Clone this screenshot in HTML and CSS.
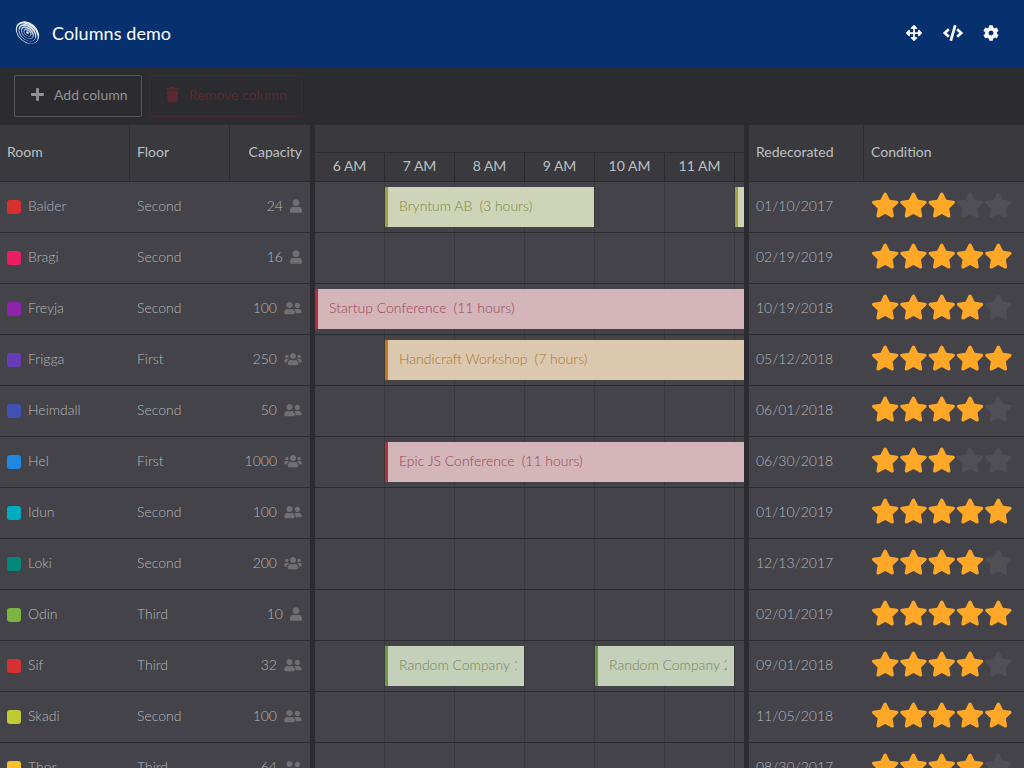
FILE: index.html
```html
<!DOCTYPE html>
<html>
<head>
  <title>Columns demo</title>
  <link rel="stylesheet" href="styles.css">
</head>
<body>
  <svg class="sprites" xmlns="http://www.w3.org/2000/svg">
    <symbol id="i-star" viewBox="0 0 576 512"><path d="M259.3 17.8L194 150.2 47.9 171.5c-26.2 3.8-36.7 36.1-17.7 54.6l105.7 103-25 145.5c-4.5 26.3 23.2 46 46.4 33.7L288 439.6l130.7 68.7c23.2 12.2 50.9-7.4 46.4-33.7l-25-145.5 105.7-103c19-18.5 8.5-50.8-17.7-54.6L382 150.2 316.7 17.8c-11.7-23.6-45.6-23.9-57.4 0z"/></symbol>
    <symbol id="i-user" viewBox="0 0 448 512"><path d="M224 256c70.7 0 128-57.3 128-128S294.7 0 224 0 96 57.3 96 128s57.3 128 128 128zm89.6 32h-16.7c-22.2 10.2-46.9 16-72.9 16s-50.6-5.8-72.9-16h-16.7C60.2 288 0 348.2 0 422.4V464c0 26.5 21.5 48 48 48h352c26.5 0 48-21.5 48-48v-41.6c0-74.2-60.2-134.4-134.4-134.4z"/></symbol>
    <symbol id="i-friends" viewBox="0 0 640 512"><path d="M192 256c61.9 0 112-50.1 112-112S253.9 32 192 32 80 82.1 80 144s50.1 112 112 112zm76.8 32h-8.3c-20.8 10-43.9 16-68.5 16s-47.6-6-68.5-16h-8.3C51.6 288 0 339.6 0 403.2V432c0 26.5 21.5 48 48 48h288c26.5 0 48-21.5 48-48v-28.8c0-63.6-51.6-115.2-115.2-115.2zM480 256c53 0 96-43 96-96s-43-96-96-96-96 43-96 96 43 96 96 96zm48 32h-3.8c-13.9 4.8-28.6 8-44.2 8s-30.3-3.2-44.2-8H432c-20.4 0-39.2 5.9-55.7 15.4 24.4 26.3 39.7 61.2 39.7 99.8v38.4c0 2.2-.5 4.3-.6 6.4H592c26.5 0 48-21.5 48-48 0-61.9-50.1-112-112-112z"/></symbol>
    <symbol id="i-users" viewBox="0 0 640 512"><path d="M96 224c35.3 0 64-28.7 64-64s-28.7-64-64-64-64 28.7-64 64 28.7 64 64 64zm448 0c35.3 0 64-28.7 64-64s-28.7-64-64-64-64 28.7-64 64 28.7 64 64 64zm32 32h-64c-17.6 0-33.5 7.1-45.1 18.6 40.3 22.1 68.9 62 75.1 109.4h66c17.7 0 32-14.3 32-32v-32c0-35.3-28.7-64-64-64zm-256 0c61.9 0 112-50.1 112-112S381.9 32 320 32 208 82.1 208 144s50.1 112 112 112zm76.8 32h-8.3c-20.8 10-43.1 16-68.5 16s-47.6-6-68.5-16h-8.3C179.6 288 128 339.6 128 403.2V432c0 26.5 21.5 48 48 48h288c26.5 0 48-21.5 48-48v-28.8c0-63.6-51.6-115.2-115.2-115.2zm-223.7-13.4C161.5 263.1 145.6 256 128 256H64c-35.3 0-64 28.7-64 64v32c0 17.7 14.3 32 32 32h65.9c6.3-47.4 34.9-87.3 75.2-109.4z"/></symbol>
    <symbol id="stars-3" viewBox="0 0 142 26"><use href="#i-star" class="star on" x="0" width="28.3" height="26"/><use href="#i-star" class="star on" x="28.3" width="28.3" height="26"/><use href="#i-star" class="star on" x="56.6" width="28.3" height="26"/><use href="#i-star" class="star off" x="84.9" width="28.3" height="26"/><use href="#i-star" class="star off" x="113.2" width="28.3" height="26"/></symbol>
    <symbol id="stars-4" viewBox="0 0 142 26"><use href="#i-star" class="star on" x="0" width="28.3" height="26"/><use href="#i-star" class="star on" x="28.3" width="28.3" height="26"/><use href="#i-star" class="star on" x="56.6" width="28.3" height="26"/><use href="#i-star" class="star on" x="84.9" width="28.3" height="26"/><use href="#i-star" class="star off" x="113.2" width="28.3" height="26"/></symbol>
    <symbol id="stars-5" viewBox="0 0 142 26"><use href="#i-star" class="star on" x="0" width="28.3" height="26"/><use href="#i-star" class="star on" x="28.3" width="28.3" height="26"/><use href="#i-star" class="star on" x="56.6" width="28.3" height="26"/><use href="#i-star" class="star on" x="84.9" width="28.3" height="26"/><use href="#i-star" class="star on" x="113.2" width="28.3" height="26"/></symbol>
  </svg>

  <header class="topbar">
    <svg class="logo" viewBox="0 0 28 28">
      <g transform="rotate(42 14 14)">
        <ellipse cx="14" cy="14" rx="13.5" ry="10" fill="#e6ebf1"/>
        <ellipse cx="14.6" cy="15" rx="12.4" ry="8.4" fill="#07306f"/>
        <ellipse cx="14" cy="14.2" rx="10.6" ry="7.6" fill="#d5dde8"/>
        <ellipse cx="14.6" cy="15" rx="9.6" ry="6.2" fill="#07306f"/>
        <ellipse cx="14" cy="14.2" rx="7.8" ry="5.2" fill="#c3cfde"/>
        <ellipse cx="14.4" cy="14.8" rx="6.8" ry="4" fill="#07306f"/>
        <ellipse cx="14" cy="14" rx="4.8" ry="3" fill="#b4c2d6"/>
        <ellipse cx="14.3" cy="14.5" rx="3.8" ry="2" fill="#07306f"/>
        <ellipse cx="14" cy="14" rx="1.6" ry="1" fill="#fff"/>
      </g>
    </svg>
    <h1 class="title">Columns demo</h1>
    <div class="tools">
      <svg class="tool move" viewBox="0 0 512 512"><path d="M352.201 425.775l-79.196 79.196c-9.373 9.373-24.568 9.373-33.941 0l-79.196-79.196c-15.119-15.119-4.411-40.971 16.971-40.97h51.162L228 284H127.196v51.162c0 21.382-25.851 32.09-40.971 16.971L7.029 272.937c-9.373-9.373-9.373-24.569 0-33.941L86.225 159.8c15.119-15.119 40.971-4.411 40.971 16.971V228H228V127.196h-51.23c-21.382 0-32.09-25.851-16.971-40.971l79.196-79.196c9.373-9.373 24.568-9.373 33.941 0l79.196 79.196c15.119 15.119 4.411 40.971-16.971 40.971h-51.162V228h100.804v-51.162c0-21.382 25.851-32.09 40.97-16.971l79.196 79.196c9.373 9.373 9.373 24.569 0 33.941L425.773 352.2c-15.119 15.119-40.971 4.411-40.97-16.971V284H284v100.804h51.23c21.382 0 32.09 25.851 16.971 40.971z"/></svg>
      <svg class="tool code" viewBox="0 0 640 512"><path d="M278.9 511.5l-61-17.7c-6.4-1.8-10-8.5-8.2-14.9L346.2 8.7c1.8-6.4 8.5-10 14.9-8.2l61 17.7c6.4 1.8 10 8.5 8.2 14.9L293.8 503.3c-1.9 6.4-8.5 10.1-14.9 8.2zm-114-112.2l43.5-46.4c4.6-4.9 4.3-12.7-.8-17.2L117 256l90.6-79.7c5.1-4.5 5.5-12.3.8-17.2l-43.5-46.4c-4.5-4.8-12.1-5.1-17-.5L3.8 247.2c-5.1 4.7-5.1 12.8 0 17.5l144.1 135.1c4.9 4.6 12.5 4.4 17-.5zm327.2.6l144.1-135.1c5.1-4.7 5.1-12.8 0-17.5L492.1 112.1c-4.8-4.5-12.4-4.3-17 .5L431.6 159c-4.6 4.9-4.3 12.7.8 17.2L523 256l-90.6 79.7c-5.1 4.5-5.5 12.3-.8 17.2l43.5 46.4c4.5 4.9 12.1 5.1 17 .6z"/></svg>
      <svg class="tool cog" viewBox="0 0 512 512"><path d="M487.4 315.7l-42.6-24.6c4.3-23.2 4.3-47 0-70.2l42.6-24.6c4.9-2.8 7.1-8.6 5.5-14-11.1-35.6-30-67.8-54.7-94.6-3.8-4.1-10-5.1-14.8-2.3L380.8 110c-17.9-15.4-38.5-27.3-60.8-35.1V25.8c0-5.6-3.9-10.5-9.4-11.7-36.7-8.2-74.3-7.8-109.2 0-5.5 1.2-9.4 6.1-9.4 11.7V75c-22.2 7.9-42.8 19.8-60.8 35.1L88.7 85.5c-4.9-2.8-11-1.9-14.8 2.3-24.7 26.7-43.6 58.9-54.7 94.6-1.7 5.4.6 11.2 5.5 14L67.3 221c-4.3 23.2-4.3 47 0 70.2l-42.6 24.6c-4.9 2.8-7.1 8.6-5.5 14 11.1 35.6 30 67.8 54.7 94.6 3.8 4.1 10 5.1 14.8 2.3l42.6-24.6c17.9 15.4 38.5 27.3 60.8 35.1v49.2c0 5.6 3.9 10.5 9.4 11.7 36.7 8.2 74.3 7.8 109.2 0 5.5-1.2 9.4-6.1 9.4-11.7v-49.2c22.2-7.9 42.8-19.8 60.8-35.1l42.6 24.6c4.9 2.8 11 1.9 14.8-2.3 24.7-26.7 43.6-58.9 54.7-94.6 1.5-5.5-.7-11.3-5.6-14.1zM256 336c-44.1 0-80-35.9-80-80s35.9-80 80-80 80 35.9 80 80-35.9 80-80 80z"/></svg>
    </div>
  </header>

  <div class="toolbar">
    <button class="btn add">
      <svg class="btn-icon" viewBox="0 0 448 512"><path d="M416 208H272V64c0-17.67-14.33-32-32-32h-32c-17.67 0-32 14.33-32 32v144H32c-17.67 0-32 14.33-32 32v32c0 17.67 14.33 32 32 32h144v144c0 17.67 14.33 32 32 32h32c17.67 0 32-14.33 32-32V304h144c17.67 0 32-14.33 32-32v-32c0-17.67-14.33-32-32-32z"/></svg>
      Add column
    </button>
    <button class="btn remove">
      <svg class="btn-icon" viewBox="0 0 448 512"><path d="M432 32H312l-9.4-18.7A24 24 0 0 0 281.1 0H166.8a23.72 23.72 0 0 0-21.4 13.3L136 32H16A16 16 0 0 0 0 48v32a16 16 0 0 0 16 16h416a16 16 0 0 0 16-16V48a16 16 0 0 0-16-16zM53.2 467a48 48 0 0 0 47.9 45h245.8a48 48 0 0 0 47.9-45L416 128H32z"/></svg>
      Remove column
    </button>
  </div>

  <div class="scheduler">
    <!-- locked columns -->
    <section class="part left">
      <div class="head-row">
        <div class="head-cell">Room</div>
        <div class="head-cell">Floor</div>
        <div class="head-cell end">Capacity</div>
      </div>
      <div class="row"><div class="cell"><i class="swatch c-red"></i>Balder</div><div class="cell">Second</div><div class="cell end">24<svg class="cap one"><use href="#i-user"/></svg></div></div>
      <div class="row"><div class="cell"><i class="swatch c-pink"></i>Bragi</div><div class="cell">Second</div><div class="cell end">16<svg class="cap one"><use href="#i-user"/></svg></div></div>
      <div class="row"><div class="cell"><i class="swatch c-purple"></i>Freyja</div><div class="cell">Second</div><div class="cell end">100<svg class="cap"><use href="#i-friends"/></svg></div></div>
      <div class="row"><div class="cell"><i class="swatch c-deep"></i>Frigga</div><div class="cell">First</div><div class="cell end">250<svg class="cap"><use href="#i-users"/></svg></div></div>
      <div class="row"><div class="cell"><i class="swatch c-indigo"></i>Heimdall</div><div class="cell">Second</div><div class="cell end">50<svg class="cap"><use href="#i-friends"/></svg></div></div>
      <div class="row"><div class="cell"><i class="swatch c-blue"></i>Hel</div><div class="cell">First</div><div class="cell end">1000<svg class="cap"><use href="#i-users"/></svg></div></div>
      <div class="row"><div class="cell"><i class="swatch c-cyan"></i>Idun</div><div class="cell">Second</div><div class="cell end">100<svg class="cap"><use href="#i-friends"/></svg></div></div>
      <div class="row"><div class="cell"><i class="swatch c-teal"></i>Loki</div><div class="cell">Second</div><div class="cell end">200<svg class="cap"><use href="#i-users"/></svg></div></div>
      <div class="row"><div class="cell"><i class="swatch c-green"></i>Odin</div><div class="cell">Third</div><div class="cell end">10<svg class="cap one"><use href="#i-user"/></svg></div></div>
      <div class="row"><div class="cell"><i class="swatch c-red"></i>Sif</div><div class="cell">Third</div><div class="cell end">32<svg class="cap"><use href="#i-friends"/></svg></div></div>
      <div class="row"><div class="cell"><i class="swatch c-lime"></i>Skadi</div><div class="cell">Second</div><div class="cell end">100<svg class="cap"><use href="#i-friends"/></svg></div></div>
      <div class="row"><div class="cell"><i class="swatch c-amber"></i>Thor</div><div class="cell">Third</div><div class="cell end">64<svg class="cap"><use href="#i-friends"/></svg></div></div>
    </section>

    <div class="splitter"></div>

    <!-- timeline -->
    <section class="part timeline">
      <div class="time-head">
        <div class="time-top"></div>
        <div class="time-ticks">
          <div class="tick">6 AM</div><div class="tick">7 AM</div><div class="tick">8 AM</div><div class="tick">9 AM</div><div class="tick">10 AM</div><div class="tick">11 AM</div><div class="tick"></div>
        </div>
      </div>
      <div class="time-row"><div class="event olive" style="left:70px;width:209px"><span class="event-text">Bryntum AB<em>(3 hours)</em></span></div><div class="event olive" style="left:420px;width:209px"></div></div>
      <div class="time-row"></div>
      <div class="time-row"><div class="event red" style="left:0;width:770px"><span class="event-text">Startup Conference<em>(11 hours)</em></span></div></div>
      <div class="time-row"><div class="event orange" style="left:70px;width:490px"><span class="event-text">Handicraft Workshop<em>(7 hours)</em></span></div></div>
      <div class="time-row"></div>
      <div class="time-row"><div class="event red" style="left:70px;width:770px"><span class="event-text">Epic JS Conference<em>(11 hours)</em></span></div></div>
      <div class="time-row"></div>
      <div class="time-row"></div>
      <div class="time-row"></div>
      <div class="time-row"><div class="event green" style="left:70px;width:139px"><span class="event-text">Random Company 1</span></div><div class="event green" style="left:280px;width:139px"><span class="event-text">Random Company 2</span></div></div>
      <div class="time-row"></div>
      <div class="time-row"></div>
    </section>

    <div class="splitter"></div>

    <!-- right columns -->
    <section class="part right">
      <div class="head-row">
        <div class="head-cell">Redecorated</div>
        <div class="head-cell">Condition</div>
      </div>
      <div class="row"><div class="cell">01/10/2017</div><div class="cell"><svg class="stars"><use href="#stars-3"/></svg></div></div>
      <div class="row"><div class="cell">02/19/2019</div><div class="cell"><svg class="stars"><use href="#stars-5"/></svg></div></div>
      <div class="row"><div class="cell">10/19/2018</div><div class="cell"><svg class="stars"><use href="#stars-4"/></svg></div></div>
      <div class="row"><div class="cell">05/12/2018</div><div class="cell"><svg class="stars"><use href="#stars-5"/></svg></div></div>
      <div class="row"><div class="cell">06/01/2018</div><div class="cell"><svg class="stars"><use href="#stars-4"/></svg></div></div>
      <div class="row"><div class="cell">06/30/2018</div><div class="cell"><svg class="stars"><use href="#stars-3"/></svg></div></div>
      <div class="row"><div class="cell">01/10/2019</div><div class="cell"><svg class="stars"><use href="#stars-5"/></svg></div></div>
      <div class="row"><div class="cell">12/13/2017</div><div class="cell"><svg class="stars"><use href="#stars-4"/></svg></div></div>
      <div class="row"><div class="cell">02/01/2019</div><div class="cell"><svg class="stars"><use href="#stars-5"/></svg></div></div>
      <div class="row"><div class="cell">09/01/2018</div><div class="cell"><svg class="stars"><use href="#stars-4"/></svg></div></div>
      <div class="row"><div class="cell">11/05/2018</div><div class="cell"><svg class="stars"><use href="#stars-5"/></svg></div></div>
      <div class="row"><div class="cell">08/30/2017</div><div class="cell"><svg class="stars"><use href="#stars-4"/></svg></div></div>
    </section>
  </div>
</body>
</html>
```

FILE: styles.css
```css
/* page */
html, body {
  height: 100%;
}

body {
  margin: 0;
  overflow: hidden;
  background-color: #2b2b30;
  color: #b6b6b8;
  font-family: Lato, "Liberation Sans", sans-serif;
  font-size: 14px;
}

.sprites {
  display: none;
}

/* top bar */
.topbar {
  display: flex;
  align-items: center;
  height: 67px;
  padding: 0 25px 2px 14px;
  box-sizing: border-box;
  background-color: #07306f;
}

.logo {
  width: 27px;
  height: 27px;
  margin-right: 11px;
}

.title {
  margin: 0;
  color: #fff;
  font-size: 18px;
  font-weight: 400;
  letter-spacing: 0.08px;
}

.tools {
  display: flex;
  align-items: center;
  gap: 20px;
  margin-left: auto;
}

.tool {
  height: 16px;
  fill: #fff;
}

.move, .cog {
  width: 16px;
}

.code {
  width: 20px;
  margin-left: 1px;
}

/* button bar */
.toolbar {
  display: flex;
  gap: 7px;
  height: 58px;
  padding: 8px 14px;
  box-sizing: border-box;
  background-color: #2b2b30;
}

.btn {
  display: flex;
  align-items: center;
  height: 42px;
  padding: 0 0 3px 16px;
  background: transparent;
  border-radius: 2px;
  font-family: inherit;
  font-size: 14px;
  white-space: nowrap;
}

.btn-icon {
  width: 13px;
  height: 15px;
  margin-right: 10px;
  fill: currentColor;
}

.add {
  width: 128px;
  border: 1px solid #58585d;
  color: #929296;
}

.remove {
  width: 153px;
  border: 1px solid #432a2e;
  color: #5c2a2e;
}

/* grid */
.scheduler {
  display: flex;
  height: 643px;
  overflow: hidden;
}

.part {
  overflow: hidden;
}

.left {
  width: 310px;
}

.timeline {
  width: 429px;
}

.right {
  width: 275px;
}

.splitter {
  width: 5px;
  background-color: #2b2b30;
}

.left .head-row, .left .row {
  grid-template-columns: 130px 100px 80px;
}

.right .head-row, .right .row {
  grid-template-columns: 115px 160px;
}

.head-row {
  display: grid;
  height: 57px;
  box-sizing: border-box;
  background-color: #39393e;
  border-bottom: 1px solid #2b2b30;
}

.head-cell {
  display: flex;
  align-items: center;
  padding: 0 8px 4px 7px;
  color: #bcc0c2;
  border-right: 1px solid #2b2b30;
}

.head-cell:last-child {
  border-right: none;
}

.head-cell.end {
  justify-content: flex-end;
}

.row {
  display: grid;
  height: 51px;
  box-sizing: border-box;
  background-color: #434349;
  border-bottom: 1px solid #2b2b30;
  font-weight: 300;
}

.cell {
  display: flex;
  align-items: center;
  padding: 0 8px 4px 7px;
}

.cell.end {
  justify-content: flex-end;
}

.swatch {
  width: 14px;
  height: 14px;
  margin: 4px 7px 0 0;
  border-radius: 3px;
}

.c-red { background-color: #d63031; }
.c-pink { background-color: #e91e63; }
.c-purple { background-color: #8e24aa; }
.c-deep { background-color: #673ab7; }
.c-indigo { background-color: #3f51b5; }
.c-blue { background-color: #1e88e5; }
.c-cyan { background-color: #00acc1; }
.c-teal { background-color: #00897b; }
.c-green { background-color: #7cb342; }
.c-lime { background-color: #c0ca33; }
.c-amber { background-color: #fbc02d; }

.cap {
  width: 18px;
  height: 14px;
  margin: 2px 0 0 7px;
  fill: #707073;
}

.cap.one {
  width: 12px;
}

.stars {
  width: 142px;
  height: 26px;
}

.star.on {
  fill: #ffa726;
}

.star.off {
  fill: #4f4f55;
}

/* timeline */
.time-head {
  height: 57px;
  box-sizing: border-box;
  background-color: #39393e;
  border-bottom: 1px solid #2b2b30;
}

.time-top {
  height: 27px;
  border-bottom: 1px solid #2b2b30;
}

.time-ticks {
  display: flex;
  height: 28px;
}

.tick {
  flex: 0 0 70px;
  box-sizing: border-box;
  line-height: 26px;
  text-align: center;
  color: #bcc0c2;
  border-right: 1px solid #2b2b30;
}

.time-row {
  position: relative;
  height: 51px;
  box-sizing: border-box;
  border-bottom: 1px solid #2b2b30;
  background-color: #434349;
  background-image: repeating-linear-gradient(to right, transparent 0, transparent 69px, #39393e 69px, #39393e 70px);
  font-weight: 300;
}

/* events */
.event {
  position: absolute;
  top: 5px;
  height: 40px;
  display: flex;
  align-items: center;
  padding: 0 7px 3px 11px;
  box-sizing: border-box;
  border-left: 3px solid;
}

.event-text {
  overflow: hidden;
  white-space: nowrap;
}

.event em {
  margin-left: 7px;
  font-style: normal;
}

.olive {
  background-color: rgba(218, 225, 193, 0.92);
  border-color: #9ca33a;
  color: #7f8640;
}

.red {
  background-color: rgba(225, 191, 196, 0.92);
  border-color: #b3303a;
  color: #9a4656;
}

.orange {
  background-color: rgba(232, 212, 185, 0.92);
  border-color: #c7761a;
  color: #a97430;
}

.green {
  background-color: rgba(208, 220, 197, 0.92);
  border-color: #6a9a44;
  color: #6f8757;
}
```
